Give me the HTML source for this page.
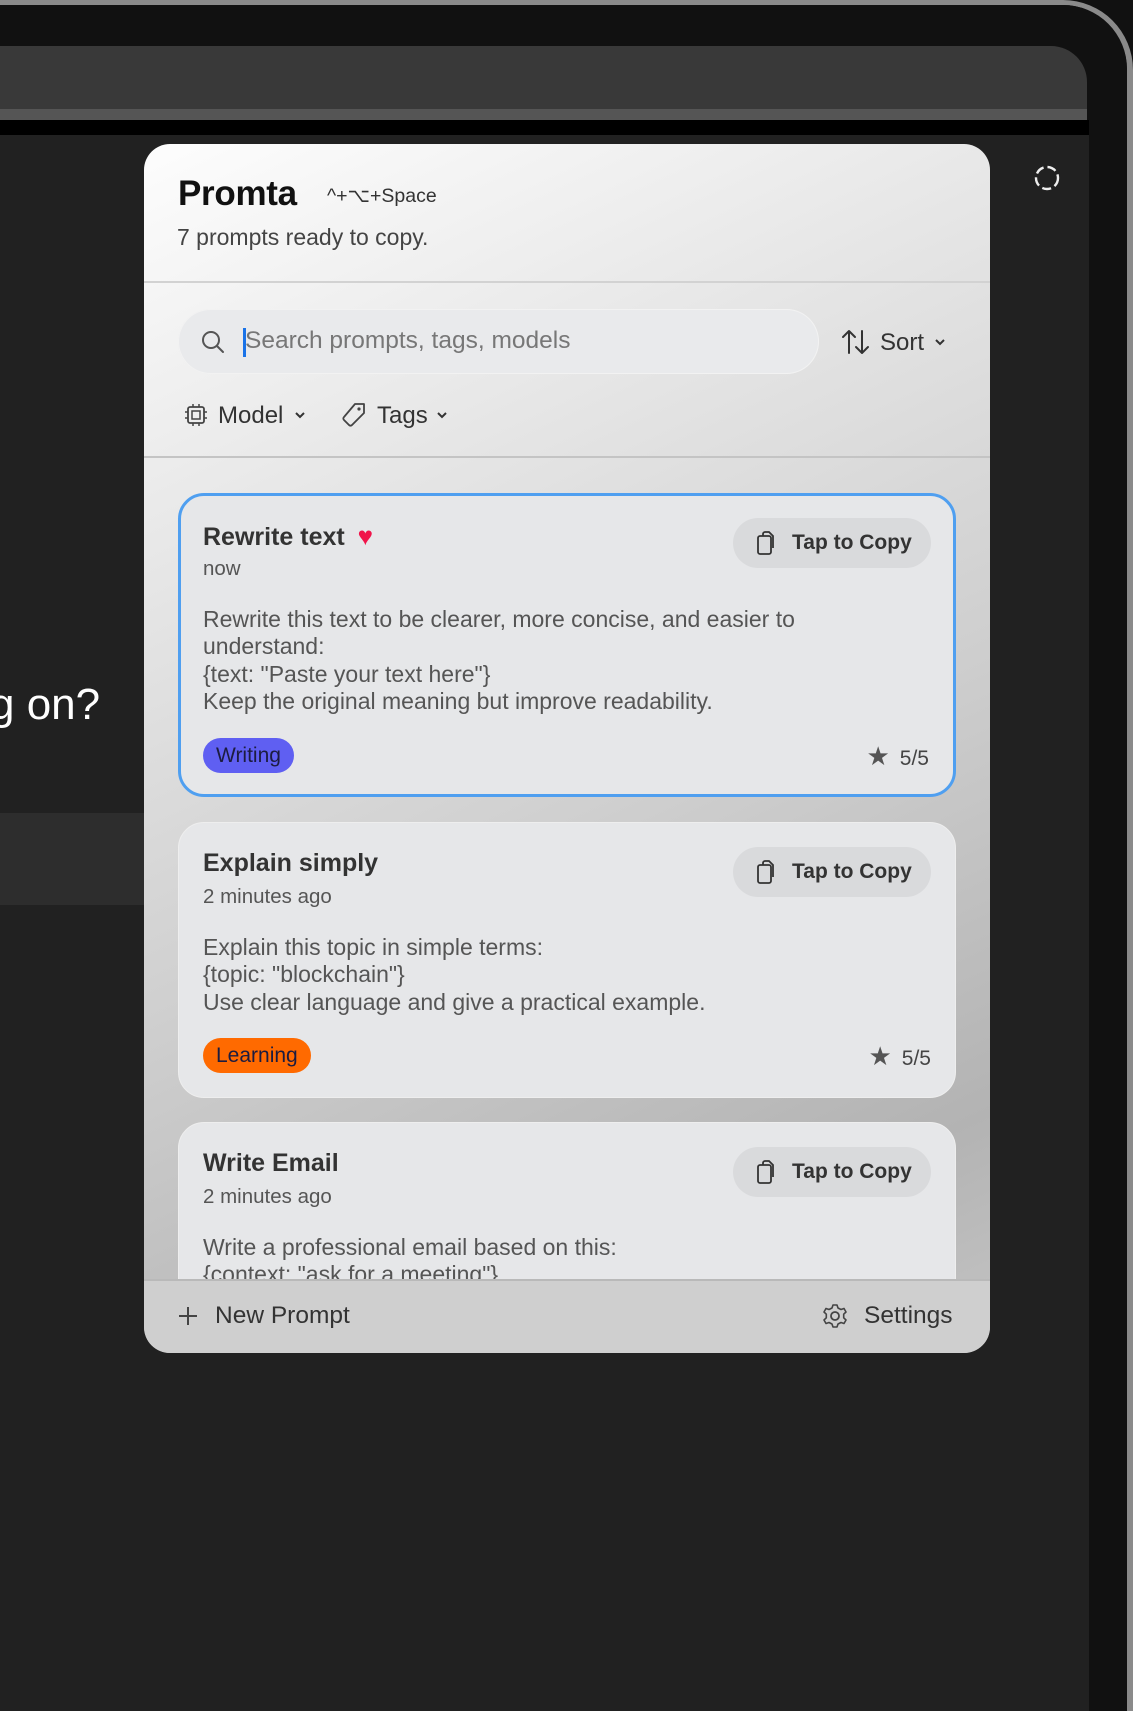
<!DOCTYPE html>
<html><head><meta charset="utf-8"><style>
*{margin:0;padding:0;box-sizing:border-box}
body{width:1133px;height:1711px;background:#111;position:relative;overflow:hidden;font-family:"Liberation Sans",sans-serif}
.abs{position:absolute}
.frameedge{left:0;top:0;width:1133px;height:1711px;border-top:5px solid #8a8a8a;border-right:6px solid #8a8a8a;border-top-right-radius:70px}
.inner{left:0;top:5px;width:1127px;height:1706px;background:#111;border-top-right-radius:64px}
.bar{left:0;top:46px;width:1087px;height:63px;background:#393939;border-top-right-radius:36px}
.bar2{left:0;top:109px;width:1087px;height:11px;background:#555}
.blk{left:0;top:120px;width:1089px;height:15px;background:#000}
.main{left:0;top:135px;width:1089px;height:1576px;background:#212121}
.lbox{left:0;top:813px;width:144px;height:92px;background:#2d2d2d}
.gon{left:-10px;top:680px;color:#fff;font-size:44px;white-space:nowrap}
.panel{left:144px;top:144px;width:846px;height:1209px;border-radius:26px;overflow:hidden;background:linear-gradient(155deg,#fdfdfd 0%,#e4e4e4 30%,#cfcfcf 55%,#b3b3b3 85%,#c4c4c4 100%)}
.p{position:absolute}
.title{left:34px;top:30px;font-size:35px;font-weight:bold;color:#111;letter-spacing:-0.3px}
.kbd{left:183px;top:40px;font-size:19.5px;color:#333}
.sub{left:33px;top:80px;font-size:23px;color:#444}
.div{left:0;width:846px;height:2px;background:#d2d2d2}
.search{left:34px;top:165px;width:641px;height:65px;border-radius:33px;background:#e9eaec;box-shadow:inset 0 0 0 1px #f2f2f2}
.ph{left:101px;top:183px;font-size:24.5px;color:#777}
.caret{left:99px;top:184px;width:3px;height:29px;background:#1a73e8}
.txt{color:#333;font-size:24px}
.card{left:34px;width:778px;background:#e6e7e9;border-radius:26px;border:1px solid #eee}
.card.sel{border:3px solid #4f9ff0}
.ct{position:absolute;left:24px;font-size:25px;font-weight:bold;color:#333}
.sel .ct,.sel .tm,.sel .bd,.sel .tag{left:22px}
.tm{position:absolute;left:24px;font-size:20.5px;color:#555}
.bd{position:absolute;left:24px;font-size:23px;line-height:27.3px;color:#555}
.btn{position:absolute;right:24px;width:198px;height:50px;border-radius:25px;background:#d9dadc;font-size:21px;font-weight:bold;color:#333}
.sel .btn{right:22px}
.btn svg{position:absolute;left:18px;top:12px}
.btn span{position:absolute;left:59px;top:13px}
.tag{position:absolute;left:24px;height:35px;border-radius:18px;font-size:21px;padding:6px 13px;color:#1c1c40}
.rate{position:absolute;right:24px;font-size:21px;color:#444}
.footer{left:0;top:1135px;width:846px;height:74px;background:#cfcfcf;border-top:2px solid #b9b9b9}
</style></head><body>
<div class="abs frameedge"></div>
<div class="abs inner"></div>
<div class="abs bar"></div>
<div class="abs bar2"></div>
<div class="abs blk"></div>
<div class="abs main"></div>
<div class="abs lbox"></div>
<div class="abs gon">g on?</div>
<svg class="abs" style="left:1032px;top:163px" width="30" height="30" viewBox="0 0 30 30"><circle cx="15" cy="15" r="11" fill="none" stroke="#eee" stroke-width="2.4" stroke-dasharray="9 4"/></svg>
<div class="abs panel">
  <div class="p title">Promta</div>
  <div class="p kbd">^+⌥+Space</div>
  <div class="p sub">7 prompts ready to copy.</div>
  <div class="p div" style="top:137px"></div>
  <div class="p search"></div>
  <svg class="p" style="left:56px;top:185px" width="26" height="26" viewBox="0 0 26 26"><circle cx="11" cy="11" r="8" fill="none" stroke="#555" stroke-width="2"/><path d="M17 17l6 6" stroke="#555" stroke-width="2" stroke-linecap="round"/></svg>
  <div class="p caret"></div>
  <div class="p ph">Search prompts, tags, models</div>
  <svg class="p" style="left:697px;top:184px" width="30" height="28" viewBox="0 0 30 28"><path d="M8 25V3M2 9l6-6 6 6M21 3v22M15 19l6 6 6-6" fill="none" stroke="#333" stroke-width="2" stroke-linecap="round" stroke-linejoin="round"/></svg>
  <div class="p txt" style="left:736px;top:185px">Sort</div>
  <svg class="p" style="left:790px;top:193px" width="12" height="10" viewBox="0 0 12 10"><path d="M2 3l4 4 4-4" fill="none" stroke="#333" stroke-width="2"/></svg>
  <svg class="p" style="left:40px;top:259px" width="24" height="24" viewBox="0 0 24 24"><rect x="4" y="4" width="16" height="16" rx="2" fill="none" stroke="#444" stroke-width="1.8"/><rect x="8" y="8" width="8" height="8" fill="none" stroke="#444" stroke-width="1.5"/><path d="M9 1v3M15 1v3M9 20v3M15 20v3M1 9h3M1 15h3M20 9h3M20 15h3" stroke="#444" stroke-width="1.5"/></svg>
  <div class="p txt" style="left:74px;top:258px">Model</div>
  <svg class="p" style="left:150px;top:266px" width="12" height="10" viewBox="0 0 12 10"><path d="M2 3l4 4 4-4" fill="none" stroke="#333" stroke-width="2"/></svg>
  <svg class="p" style="left:196px;top:257px" width="28" height="28" viewBox="0 0 28 28"><path d="M15 3h9v9L12 24a2 2 0 0 1-3 0L4 19a2 2 0 0 1 0-3z" fill="none" stroke="#444" stroke-width="1.8" stroke-linejoin="round"/><circle cx="19" cy="8" r="1.6" fill="#444"/></svg>
  <div class="p txt" style="left:233px;top:258px">Tags</div>
  <svg class="p" style="left:292px;top:266px" width="12" height="10" viewBox="0 0 12 10"><path d="M2 3l4 4 4-4" fill="none" stroke="#333" stroke-width="2"/></svg>
  <div class="p div" style="top:312px;background:#c4c4c4"></div>

  <div class="p card sel" style="top:349px;height:304px">
    <div class="ct" style="top:25px">Rewrite text <span style="color:#f0144a;font-size:26px;margin-left:6px">♥</span></div>
    <div class="tm" style="top:61px">now</div>
    <div class="btn" style="top:22px"><svg width="26" height="26" viewBox="0 0 24 26"><path d="M8 6h9a2 2 0 0 1 2 2v14a2 2 0 0 1-2 2H8a2 2 0 0 1-2-2V8a2 2 0 0 1 2-2zM11 6V4a2 2 0 0 1 2-2h4l4 4v12" fill="none" stroke="#333" stroke-width="1.8"/></svg><span>Tap to Copy</span></div>
    <div class="bd" style="top:110px">Rewrite this text to be clearer, more concise, and easier to<br>understand:<br>{text: "Paste your text here"}<br>Keep the original meaning but improve readability.</div>
    <div class="tag" style="top:242px;background:#5f5ff2">Writing</div>
    <div class="rate" style="top:245px"><span style="font-size:26px;color:#555;margin-right:10px">★</span>5/5</div>
  </div>

  <div class="p card" style="top:678px;height:276px">
    <div class="ct" style="top:26px">Explain simply</div>
    <div class="tm" style="top:62px">2 minutes ago</div>
    <div class="btn" style="top:24px"><svg width="26" height="26" viewBox="0 0 24 26"><path d="M8 6h9a2 2 0 0 1 2 2v14a2 2 0 0 1-2 2H8a2 2 0 0 1-2-2V8a2 2 0 0 1 2-2zM11 6V4a2 2 0 0 1 2-2h4l4 4v12" fill="none" stroke="#333" stroke-width="1.8"/></svg><span>Tap to Copy</span></div>
    <div class="bd" style="top:111px">Explain this topic in simple terms:<br>{topic: "blockchain"}<br>Use clear language and give a practical example.</div>
    <div class="tag" style="top:215px;background:#ff6a00">Learning</div>
    <div class="rate" style="top:218px"><span style="font-size:26px;color:#555;margin-right:10px">★</span>5/5</div>
  </div>

  <div class="p card" style="top:978px;height:260px">
    <div class="ct" style="top:26px">Write Email</div>
    <div class="tm" style="top:62px">2 minutes ago</div>
    <div class="btn" style="top:24px"><svg width="26" height="26" viewBox="0 0 24 26"><path d="M8 6h9a2 2 0 0 1 2 2v14a2 2 0 0 1-2 2H8a2 2 0 0 1-2-2V8a2 2 0 0 1 2-2zM11 6V4a2 2 0 0 1 2-2h4l4 4v12" fill="none" stroke="#333" stroke-width="1.8"/></svg><span>Tap to Copy</span></div>
    <div class="bd" style="top:111px">Write a professional email based on this:<br>{context: "ask for a meeting"}</div>
  </div>

  <div class="p footer">
    <svg class="p" style="left:33px;top:24px" width="22" height="22" viewBox="0 0 22 22"><path d="M11 2v18M2 11h18" stroke="#444" stroke-width="2"/></svg>
    <div class="p" style="left:71px;top:21px;font-size:24.5px;color:#333">New Prompt</div>
    <svg class="p" style="left:677px;top:21px" width="28" height="28" viewBox="0 0 28 28"><circle cx="14" cy="14" r="4" fill="none" stroke="#444" stroke-width="1.8"/><path d="M12 3h4l1 3 3 1.5 3-1 2 3.5-2.3 2.2v3.6L25 18l-2 3.5-3-1L17 22l-1 3h-4l-1-3-3-1.5-3 1L3 18l2.3-2.2v-3.6L3 10l2-3.5 3 1L11 6z" fill="none" stroke="#444" stroke-width="1.6" stroke-linejoin="round"/></svg>
    <div class="p" style="left:720px;top:21px;font-size:24.5px;color:#333">Settings</div>
  </div>
</div>
</body></html>
